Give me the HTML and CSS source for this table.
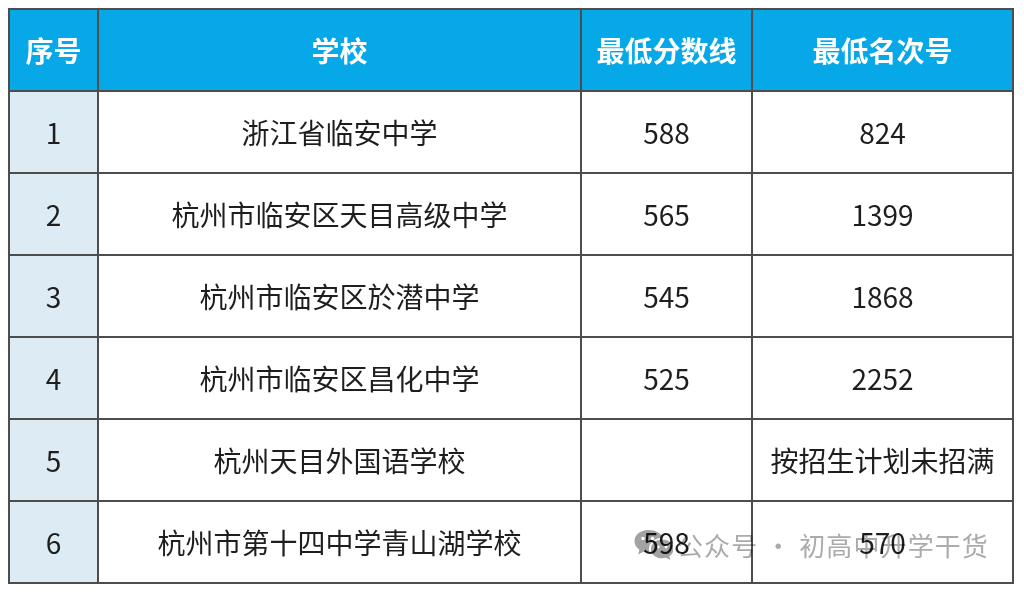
FILE: index.html
```html
<!DOCTYPE html>
<html lang="zh-CN">
<head>
<meta charset="utf-8">
<link rel="stylesheet" href="styles.css">
</head>
<body>
<div class="page">
  <table class="scores">
    <colgroup>
      <col class="c-no">
      <col class="c-school">
      <col class="c-score">
      <col class="c-rank">
    </colgroup>
    <thead>
      <tr><th>序号</th><th>学校</th><th>最低分数线</th><th>最低名次号</th></tr>
    </thead>
    <tbody>
      <tr><td class="no">1</td><td>浙江省临安中学</td><td>588</td><td>824</td></tr>
      <tr><td class="no">2</td><td>杭州市临安区天目高级中学</td><td>565</td><td>1399</td></tr>
      <tr><td class="no">3</td><td>杭州市临安区於潜中学</td><td>545</td><td>1868</td></tr>
      <tr><td class="no">4</td><td>杭州市临安区昌化中学</td><td>525</td><td>2252</td></tr>
      <tr><td class="no">5</td><td>杭州天目外国语学校</td><td></td><td>按招生计划未招满</td></tr>
      <tr><td class="no">6</td><td>杭州市第十四中学青山湖学校</td><td>598</td><td>570</td></tr>
    </tbody>
  </table>
  <div class="watermark">
    <svg class="wx" width="40" height="34" viewBox="0 0 40 34" aria-hidden="true">
      <path d="M15 2C7.3 2 1.5 7 1.5 13.2c0 3.5 1.9 6.5 4.9 8.6L5 26.5l5.3-2.8c1.5.4 3 .6 4.7.6.5 0 .9 0 1.4-.1-.3-1-.5-2-.5-3.1 0-6.3 6-11.3 13.3-11.3h.6C28.6 5.3 22.4 2 15 2z" fill="#a3a3a3"/>
      <path d="M29.2 11.5c-6.3 0-11.3 4.2-11.3 9.4s5 9.4 11.3 9.4c1.3 0 2.6-.2 3.8-.5l4.4 2.3-1.2-3.8c2.6-1.7 4.3-4.3 4.3-7.4 0-5.2-5-9.4-11.3-9.4z" fill="#a3a3a3"/>
      <circle cx="10" cy="10.5" r="1.7" fill="#ffffff"/>
      <circle cx="19.5" cy="10.5" r="1.7" fill="#ffffff"/>
      <circle cx="25.3" cy="19" r="1.4" fill="#ffffff"/>
      <circle cx="33" cy="19" r="1.4" fill="#ffffff"/>
    </svg>
    <span class="wm-text">公众号 · 初高中升学干货</span>
  </div>
</div>
</body>
</html>
```

FILE: styles.css
```css
html, body {
  margin: 0;
  padding: 0;
  background: #ffffff;
}
.page {
  position: relative;
  width: 1024px;
  height: 594px;
  padding: 8px 0 0 8px;
  box-sizing: border-box;
  font-family: "Noto Sans CJK SC", "Noto Sans", sans-serif;
}
.scores {
  border-collapse: collapse;
  table-layout: fixed;
  width: 1006px;
  border: 2px solid #4d4d4d;
}
.c-no { width: 89px; }
.c-school { width: 483px; }
.c-score { width: 171px; }
.c-rank { width: 261px; }
.scores th,
.scores td {
  border: 2px solid #4d4d4d;
  height: 80px;
  padding: 0;
  text-align: center;
  vertical-align: middle;
  font-size: 28px;
  line-height: 1;
}
.scores thead th {
  background: #06a8e8;
  color: #ffffff;
  font-weight: 700;
  font-size: 28px;
  height: 80px;
}
.scores td {
  color: #1e1e1e;
  font-weight: 400;
  background: #ffffff;
}
.scores td.no {
  background: #dcebf4;
}
.watermark {
  position: absolute;
  left: 633px;
  top: 528px;
  display: flex;
  align-items: center;
  gap: 4px;
  pointer-events: none;
  mix-blend-mode: multiply;
}
.wx {
  display: block;
}
.wm-text {
  font-size: 26px;
  letter-spacing: 1.1px;
  color: #ababab;
  line-height: 1;
}
```
